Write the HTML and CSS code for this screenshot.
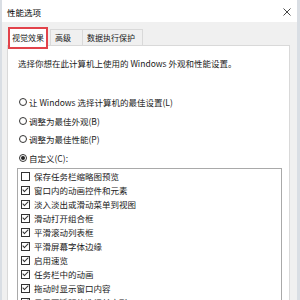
FILE: index.html
```html
<!DOCTYPE html>
<html>
<head>
  <title>性能选项</title>
  <link rel="stylesheet" href="styles.css">
</head>
<body>
  <div class="window">
    <div class="titlebar">
      <span class="title">性能选项</span>
      <svg class="close" width="8" height="8" viewBox="0 0 8 8">
        <path d="M0.5 0.5 L7.5 7.5 M7.5 0.5 L0.5 7.5" stroke="#333" stroke-width="0.9" fill="none"/>
      </svg>
    </div>

    <div class="tabs">
      <div class="tab active">视觉效果</div>
      <div class="tab tab-short">高级</div>
      <div class="tab tab-long">数据执行保护</div>
    </div>

    <div class="panel">
      <p class="intro">选择你想在此计算机上使用的 Windows 外观和性能设置。</p>

      <div class="options">
        <div class="option"><span class="radio"></span>让 Windows 选择计算机的最佳设置(L)</div>
        <div class="option"><span class="radio"></span>调整为最佳外观(B)</div>
        <div class="option"><span class="radio"></span>调整为最佳性能(P)</div>
        <div class="option"><span class="radio on"></span>自定义(C):</div>
      </div>

      <div class="list">
        <div class="item"><span class="box"></span>保存任务栏缩略图预览</div>
        <div class="item"><span class="box on"></span>窗口内的动画控件和元素</div>
        <div class="item"><span class="box on"></span>淡入淡出或滑动菜单到视图</div>
        <div class="item"><span class="box on"></span>滑动打开组合框</div>
        <div class="item"><span class="box on"></span>平滑滚动列表框</div>
        <div class="item"><span class="box on"></span>平滑屏幕字体边缘</div>
        <div class="item"><span class="box on"></span>启用速览</div>
        <div class="item"><span class="box on"></span>任务栏中的动画</div>
        <div class="item"><span class="box on"></span>拖动时显示窗口内容</div>
        <div class="item"><span class="box on"></span>显示亚透明的选择长方形</div>
      </div>
    </div>
  </div>
</body>
</html>
```

FILE: styles.css
```css
body {
  margin: 0;
  background: #d9dee4;
  font-family: "Noto Sans CJK SC", sans-serif;
  color: #1a1a1a;
}

.window {
  margin-left: 2px;
  width: 295px;
  height: 300px;
  background: #f0f0f0;
  display: flex;
  flex-direction: column;
  overflow: hidden;
}

.titlebar {
  height: 22px;
  flex-shrink: 0;
  background: #fff;
  display: flex;
  align-items: center;
  justify-content: space-between;
  padding: 1px 6px 0 5px;
  box-sizing: border-box;
}

.title {
  font-size: 8.5px;
  line-height: 12px;
  color: #000;
}

.tabs {
  height: 23px;
  flex-shrink: 0;
  display: flex;
  align-items: flex-end;
  padding-left: 6px;
}

.tab {
  box-sizing: border-box;
  font-size: 8px;
  height: 16px;
  line-height: 15px;
  border: 1px solid #d9d9d9;
  border-bottom: none;
  padding-left: 4px;
}

.tab.active {
  position: relative;
  z-index: 1;
  width: 40px;
  height: 22px;
  margin-bottom: -4px;
  padding: 0 0 2px;
  border: 2px solid #e2434b;
  background: #fff;
  text-align: center;
  line-height: 18px;
}

.tab-short {
  width: 33px;
  margin-left: 2px;
}

.tab-long {
  width: 61px;
  margin-left: -1px;
}

.panel {
  flex: 1;
  margin-left: 5px;
  width: 283px;
  box-sizing: border-box;
  background: #fff;
  border: 1px solid #d9d9d9;
  padding-left: 10px;
  font-size: 8.5px;
}

.intro {
  margin: 11px 0 0;
  line-height: 12px;
}

.options {
  margin-top: 24px;
}

.option {
  height: 18.5px;
  display: flex;
  align-items: center;
  gap: 2px;
}

.radio {
  width: 8px;
  height: 8px;
  margin-left: 1px;
  box-sizing: border-box;
  border: 1px solid #333;
  border-radius: 50%;
  display: flex;
  align-items: center;
  justify-content: center;
}

.radio.on::after {
  content: "";
  width: 4px;
  height: 4px;
  border-radius: 50%;
  background: #222;
}

.list {
  margin: 1px 0 0 -1px;
  width: 265px;
  box-sizing: border-box;
  border: 1px solid #a9a9a9;
  border-bottom: none;
  padding-left: 3px;
}

.item {
  height: 14px;
  display: flex;
  align-items: center;
  gap: 4px;
}

.box {
  width: 9px;
  height: 9px;
  box-sizing: border-box;
  border: 1px solid #333;
  display: flex;
  align-items: center;
  justify-content: center;
}

.box.on::after {
  content: "";
  width: 2px;
  height: 5px;
  margin-top: -2px;
  border: solid #333;
  border-width: 0 1px 1px 0;
  transform: rotate(45deg);
}
```
